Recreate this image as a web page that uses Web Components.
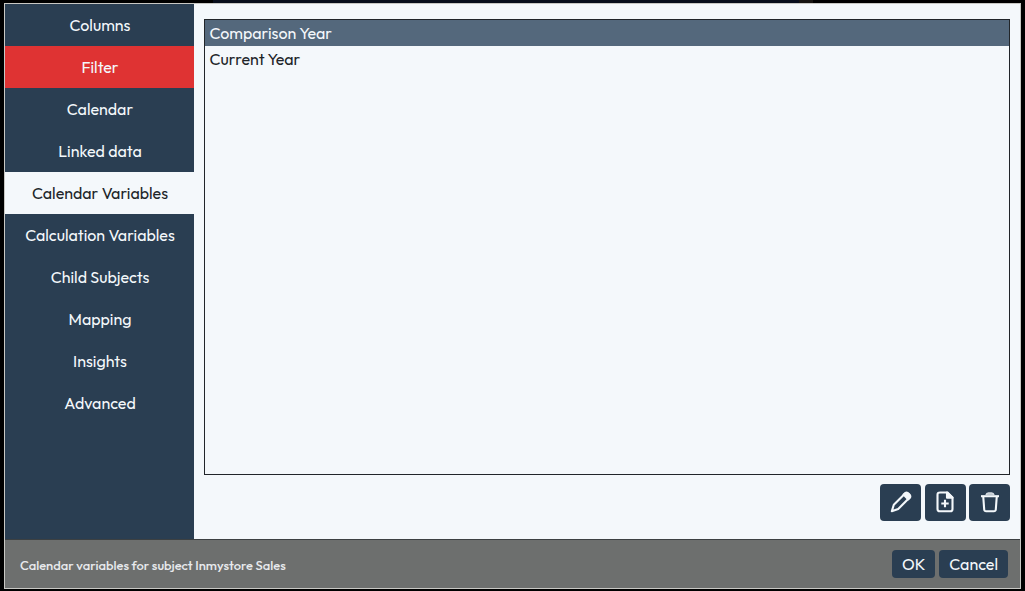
<!DOCTYPE html>
<html lang="en">
<head>
<meta charset="utf-8">
<title>Calendar variables</title>
<style>
    html, body { height: 100%; margin: 0; }

    body {
        box-sizing: border-box;
        padding: 3px 4px 2px;
        overflow: hidden;
        background: linear-gradient(90deg, #000 213px, #080e1c 213px, #080e1c 799px, #171411 799px, #171411 813px, #000 813px) top / 100% 3px no-repeat #000;
        font: 16px/20px Outfit, Lato, sans-serif;
        color: #212529;
    }
</style>
</head>
<body>

<subject-dialog>
    <side-tabs slot="tabs">
        <side-tab>Columns</side-tab>
        <side-tab state="filtered">Filter</side-tab>
        <side-tab>Calendar</side-tab>
        <side-tab>Linked data</side-tab>
        <side-tab state="active">Calendar Variables</side-tab>
        <side-tab>Calculation Variables</side-tab>
        <side-tab>Child Subjects</side-tab>
        <side-tab>Mapping</side-tab>
        <side-tab>Insights</side-tab>
        <side-tab>Advanced</side-tab>
    </side-tabs>

    <variable-list>
        <span slot="heading">Comparison Year</span>
        <span>Current Year</span>
    </variable-list>

    <icon-button slot="tools" icon="pencil"></icon-button>
    <icon-button slot="tools" icon="file"></icon-button>
    <icon-button slot="tools" icon="trash"></icon-button>

    <span slot="status">Calendar variables for subject Inmystore Sales</span>
    <text-button slot="actions">OK</text-button>
    <text-button slot="actions">Cancel</text-button>
</subject-dialog>

<script>
class SubjectDialog extends HTMLElement {
    connectedCallback() {
        this.attachShadow({mode: 'open'}).innerHTML = `
                <style>
                    :host {
                        box-sizing: border-box;
                        display: flex;
                        flex-direction: column;
                        width: 1017px;
                        height: 586px;
                        border: 1px solid #c8c8c4;
                        background: #f4f8fb;
                    }

                    .body { flex: 1; display: flex; min-height: 0; }

                    .content {
                        flex: 1;
                        display: flex;
                        flex-direction: column;
                        gap: 9px;
                        padding: 15px 10px 18px;
                    }

                    .tools { display: flex; justify-content: flex-end; gap: 3.5px; }

                    footer {
                        box-sizing: border-box;
                        display: flex;
                        align-items: center;
                        height: 49px;
                        padding: 0 12px 0 15px;
                        border-top: 1px solid #3c4042;
                        background: #6d6f6e;
                    }

                    .status {
                        flex: 1;
                        padding-top: 2px;
                        font-size: 12.95px;
                        font-weight: 500;
                        color: #e8eaed;
                    }

                    .actions { display: flex; gap: 4px; }
                </style>

                <div class="body">
                    <slot name="tabs"></slot>
                    <div class="content">
                        <slot></slot>
                        <div class="tools"><slot name="tools"></slot></div>
                    </div>
                </div>
                <footer>
                    <div class="status"><slot name="status"></slot></div>
                    <div class="actions"><slot name="actions"></slot></div>
                </footer>
        `;
    }
}

class SideTabs extends HTMLElement {
    connectedCallback() {
        this.attachShadow({mode: 'open'}).innerHTML = `
                <style>
                    :host { display: block; width: 189px; background: #2a3e52; }
                </style>

                <slot></slot>
        `;
    }
}

class SideTab extends HTMLElement {
    connectedCallback() {
        this.attachShadow({mode: 'open'}).innerHTML = `
                <style>
                    :host {
                        box-sizing: border-box;
                        display: flex;
                        align-items: center;
                        justify-content: center;
                        height: 42px;
                        padding-left: 1px;
                        color: #f4f8fb;
                    }
                    :host([state=filtered]) { background: #df3333; }
                    :host([state=active]) { background: #f4f8fb; color: #212529; }
                </style>

                <slot></slot>
        `;
    }
}

class VariableList extends HTMLElement {
    connectedCallback() {
        this.attachShadow({mode: 'open'}).innerHTML = `
                <style>
                    :host { flex: 1; display: block; border: 1px solid #212529; }

                    div { box-sizing: border-box; height: 26px; padding: 3px 4.5px; }

                    .heading { background: #54687c; color: #f4f8fb; }
                </style>

                <div class="heading"><slot name="heading"></slot></div>
                <div><slot></slot></div>
        `;
    }
}

const icons = {
    pencil: `
        <path d="M2.8 21.2 L4.8 14.8 L15.6 4.1 Q17.5 2.2 19.3 4 L19.9 4.6 Q21.7 6.4 19.9 8.3 L9.2 19 Z"/>
        <path d="M14.6 4.6 L16.4 3 Q18 2 19.9 3.9 Q22 6 21 7.6 L19.3 9.4 Z" fill="#f4f8fb"/>`,
    file: `
        <path d="M6.5 2.5 H14.5 L19.5 7.5 V19 Q19.5 21.3 17.2 21.3 H6.8 Q4.5 21.3 4.5 19 V4.8 Q4.5 2.5 6.8 2.5"/>
        <path d="M14 2.5 V7.8 H19.5 Z" fill="#f4f8fb"/>
        <path d="M12 9.8 V17.2 M8.3 13.5 H15.7"/>`,
    trash: `
        <path d="M3 6.2 H21"/>
        <path d="M5.2 6 L6.2 19.5 Q6.4 21.3 8.2 21.3 H15.8 Q17.6 21.3 17.8 19.5 L18.8 6"/>
        <path d="M7.8 5.4 Q8.5 3 10.4 3 H13.6 Q15.5 3 16.2 5.4 Z" fill="#b9c2cb" stroke="#d3dae0" stroke-width="1.4"/>`
};

class IconButton extends HTMLElement {
    connectedCallback() {
        this.attachShadow({mode: 'open'}).innerHTML = `
                <style>
                    :host {
                        display: flex;
                        align-items: center;
                        justify-content: center;
                        width: 41px;
                        height: 37px;
                        border-radius: 4px;
                        background: #2a3e52;
                    }

                    svg {
                        width: 24px;
                        height: 24px;
                        margin-bottom: 2px;
                        fill: none;
                        stroke: #f4f8fb;
                        stroke-width: 2.1;
                        stroke-linejoin: round;
                    }
                </style>

                <svg viewBox="0 0 24 24">${icons[this.getAttribute('icon')]}</svg>
        `;
    }
}

class TextButton extends HTMLElement {
    connectedCallback() {
        this.attachShadow({mode: 'open'}).innerHTML = `
                <style>
                    :host {
                        display: flex;
                        align-items: center;
                        justify-content: center;
                        height: 28px;
                        padding: 0 10px;
                        border-radius: 4px;
                        background: #2a3e52;
                        color: #f4f8fb;
                    }
                </style>

                <slot></slot>
        `;
    }
}

customElements.define('subject-dialog', SubjectDialog);
customElements.define('side-tabs',      SideTabs);
customElements.define('side-tab',       SideTab);
customElements.define('variable-list',  VariableList);
customElements.define('icon-button',    IconButton);
customElements.define('text-button',    TextButton);
</script>
</body>
</html>
